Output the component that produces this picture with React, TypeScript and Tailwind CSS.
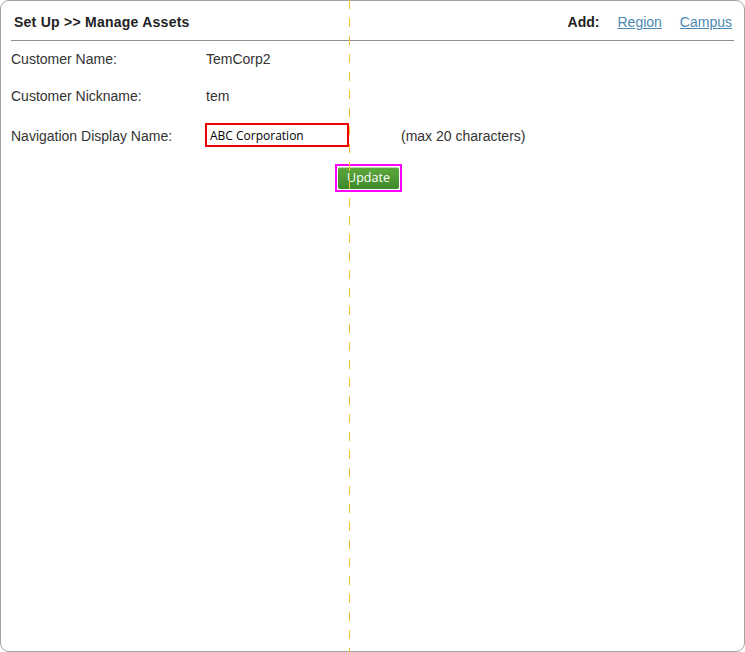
import React from "react";

export default function App() {
  return (
    <div className="w-[745px] h-[652px] bg-white relative" style={{ fontFamily: '"Liberation Sans", Arial, sans-serif' }}>
      <div className="w-[745px] h-[652px] border border-[#a3a3a3] rounded-[9px] box-border">
        <div className="mx-[10px] h-[40px] border-b border-[#8f8f8f] flex items-center pt-[3px] pl-[3px] pr-[2px]">
          <div className="font-bold text-[14px] tracking-[0.25px] text-[#222]">Set Up &gt;&gt; Manage Assets</div>
          <div className="ml-auto flex items-center gap-[18px] text-[14px]">
            <span className="font-bold text-[#222]">Add:</span>
            <a className="text-[#4b87b3] underline">Region</a>
            <a className="text-[#4b87b3] underline">Campus</a>
          </div>
        </div>
        <div className="pl-[10px] text-[14px] text-[#333]">
          <div className="flex items-center h-[37px]">
            <div className="w-[195px]">Customer Name:</div>
            <div>TemCorp2</div>
          </div>
          <div className="flex items-center h-[37px]">
            <div className="w-[195px]">Customer Nickname:</div>
            <div>tem</div>
          </div>
          <div className="flex items-center h-[40px] mt-[1px]">
            <div className="w-[194px]">Navigation Display Name:</div>
            <div className="w-[144px] h-[24px] mb-[2px] border-2 border-[#ee0000] flex items-center pl-[3px] pt-[2px] text-[12px] text-black" style={{ fontFamily: '"Open Sans", "Noto Sans", sans-serif' }}>
              ABC Corporation
            </div>
            <div className="ml-[52px]">(max 20 characters)</div>
          </div>
          <div className="ml-[324px] mt-[8px] w-[67px] h-[28px] border-2 border-[#ff00ff] p-[1px] flex">
            <div className="flex-1 rounded-[2px] bg-gradient-to-b from-[#5da63c] to-[#3d8a2c] border-t border-[#b9dca8] flex items-center justify-center text-white text-[12.5px]" style={{ fontFamily: '"Open Sans", "Noto Sans", sans-serif' }}>
              Update
            </div>
          </div>
        </div>
      </div>
      <div
        className="absolute left-[349px] top-0 w-px h-[652px]"
        style={{ background: "repeating-linear-gradient(to bottom, #f2c230 0px, #f2c230 9px, transparent 9px, transparent 18px)" }}
      />
    </div>
  );
}
